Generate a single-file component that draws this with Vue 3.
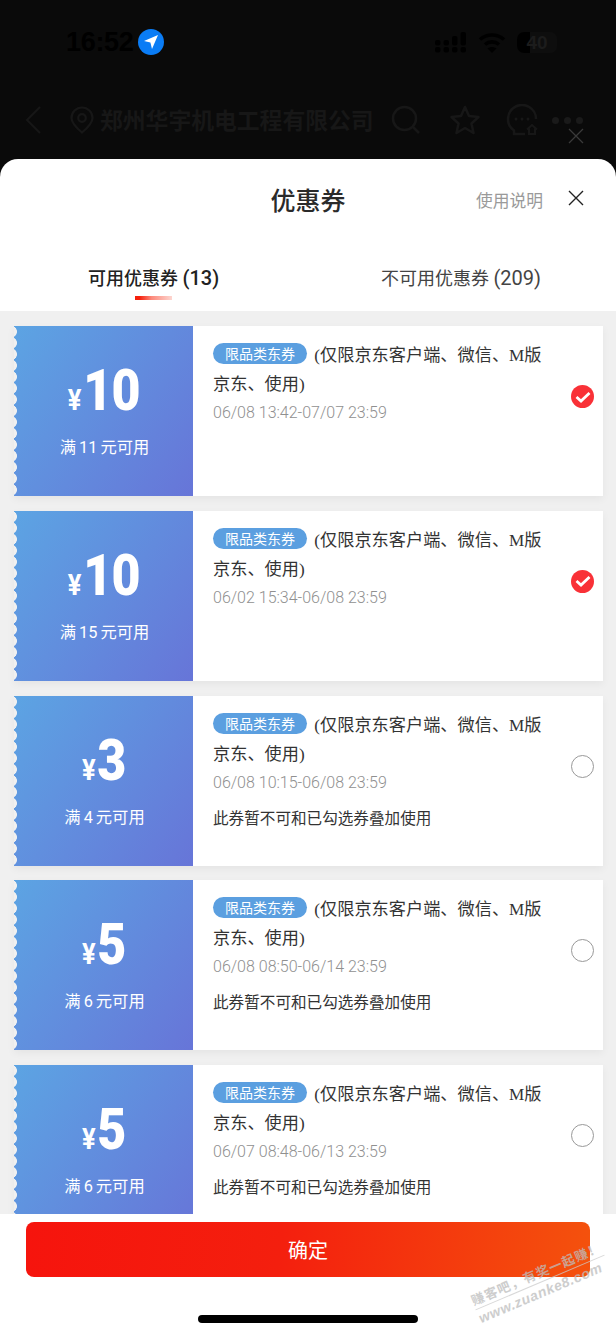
<script setup>
const coupons = [
  { amount: '10', sub: '满 11 元可用', date: '06/08 13:42-07/07 23:59', checked: true },
  { amount: '10', sub: '满 15 元可用', date: '06/02 15:34-06/08 23:59', checked: true },
  { amount: '3', sub: '满 4 元可用', date: '06/08 10:15-06/08 23:59', note: true },
  { amount: '5', sub: '满 6 元可用', date: '06/08 08:50-06/14 23:59', note: true },
  { amount: '5', sub: '满 6 元可用', date: '06/07 08:48-06/13 23:59', note: true },
]
</script>

<template>
  <div class="page">
    <div class="top">
      <div class="status">
        <span class="time">16:52</span>
        <span class="loc">
          <svg width="16" height="16" viewBox="0 0 16 16"><path d="M15 1 9 15 7.4 8.6 1 7z" fill="#fff"/></svg>
        </span>
        <span class="status-right">
          <svg width="32" height="21" viewBox="0 0 32 21" fill="#000">
            <rect x="0" y="8" width="5.500" height="5.500" rx="2"/><rect x="0" y="15" width="5.500" height="5.500" rx="2"/>
            <rect x="8.500" y="8" width="5.500" height="5.500" rx="2"/><rect x="8.500" y="15" width="5.500" height="5.500" rx="2"/>
            <rect x="17" y="4" width="5.500" height="9.500" rx="2"/><rect x="17" y="15" width="5.500" height="5.500" rx="2"/>
            <rect x="25.500" y="0" width="5.500" height="13.500" rx="2"/><rect x="25.500" y="15" width="5.500" height="5.500" rx="2"/>
          </svg>
          <svg width="28" height="21" viewBox="0 0 28 21" fill="none" stroke="#000" stroke-width="3.600">
            <path d="M2 7.500c7-6 17-6 24 0"/><path d="M7 12.500c4-3.500 10-3.500 14 0"/><path d="M14 21l-4.500-4.500c2.500-2 6.500-2 9 0z" fill="#000" stroke="none"/>
          </svg>
          <span class="battery">40</span>
        </span>
      </div>
      <div class="nav">
        <svg class="ic-back" width="16" height="28" viewBox="0 0 16 28" fill="none" stroke="#171717" stroke-width="2"><path d="M15 1 2 14l13 13"/></svg>
        <svg class="ic-pin" width="24" height="28" viewBox="0 0 24 28" fill="none" stroke="#171717" stroke-width="2.200"><path d="M12 26.500C5.500 21 1.500 16.500 1.500 12a10.500 10.500 0 0 1 21 0c0 4.500-4 9-10.500 14.500z"/><circle cx="12" cy="12" r="3.800"/></svg>
        <span class="nav-title">郑州华宇机电工程有限公司</span>
        <svg class="ic-search" width="30" height="30" viewBox="0 0 30 30" fill="none" stroke="#171717" stroke-width="2.500"><circle cx="13.500" cy="13.500" r="11.500"/><path d="m22 22 6 6"/></svg>
        <svg class="ic-star" width="32" height="32" viewBox="0 0 32 32" fill="none" stroke="#171717" stroke-width="2.500" stroke-linejoin="round"><path d="m16 3 4 9 9.500 1-7 6.500 2 9.500-8.500-5-8.500 5 2-9.500-7-6.500L12 12z"/></svg>
        <svg class="ic-chat" width="32" height="32" viewBox="0 0 32 32" fill="none" stroke="#171717" stroke-width="2.500"><path d="M30 15A14 14 0 1 0 8 26.500V30h11"/><circle cx="10" cy="15" r="1.500" fill="#171717" stroke="none"/><circle cx="16" cy="15" r="1.500" fill="#171717" stroke="none"/><circle cx="22" cy="15" r="1.500" fill="#171717" stroke="none"/><path d="M21 25.500l5-4.500 5 4.500M23 24.500V30h6v-5.500" stroke-width="2"/></svg>
        <span class="dots"><i></i><i></i><i></i></span>
      </div>
      <svg class="outer-close" width="16" height="16" viewBox="0 0 16 16" stroke="#3a3a3a" stroke-width="1.300"><path d="m1 1 14 14M15 1 1 15"/></svg>
    </div>

    <div class="sheet">
      <div class="head">
        <span class="title">优惠券</span>
        <span class="help">使用说明</span>
        <svg class="close" width="16" height="16" viewBox="0 0 16 16" stroke="#222" stroke-width="1.400"><path d="m1 1 14 14M15 1 1 15"/></svg>
      </div>
      <div class="tabs">
        <div class="tab active">可用优惠券 <span class="count">(13)</span><i class="bar"></i></div>
        <div class="tab">不可用优惠券 <span class="count">(209)</span></div>
      </div>
      <div class="list">
        <div v-for="(c, i) in coupons" :key="i" class="card">
          <div class="left">
            <div class="price"><span class="yen">¥</span><span class="num">{{ c.amount }}</span></div>
            <div class="sub">{{ c.sub }}</div>
          </div>
          <div class="right">
            <div class="desc"><span class="tag">限品类东券</span> (仅限京东客户端、微信、M版京东、使用)</div>
            <div class="date">{{ c.date }}</div>
            <div v-if="c.note" class="note">此券暂不可和已勾选券叠加使用</div>
            <span v-if="c.checked" class="radio on">
              <svg width="16" height="12" viewBox="0 0 16 12" fill="none" stroke="#fff" stroke-width="2.800"><path d="m1.500 6 4.500 4 8.500-8"/></svg>
            </span>
            <span v-else class="radio"></span>
          </div>
        </div>
      </div>
      <div class="footer">
        <button class="confirm">确定</button>
        <div class="home"></div>
      </div>
    </div>
    <div class="mark"><div class="m1">赚客吧，有奖一起赚！</div><div class="m2">www.zuanke8.com</div></div>
  </div>
</template>

<style scoped>
.page { position: relative; width: 616px; height: 1334px; overflow: hidden; background: #0a0a0a; display: flex; flex-direction: column; font-family: "Noto Sans CJK SC", sans-serif; }
.top { position: relative; height: 159px; flex: none; }
.status { height: 84px; display: flex; align-items: center; padding: 0 0 0 66px; box-sizing: border-box; }
.time { font: 600 27px/1 "Liberation Sans", sans-serif; color: #000; letter-spacing: -.3px; width: 72px; }
.loc { width: 26px; height: 26px; border-radius: 50%; background: #0a7cf5; display: flex; align-items: center; justify-content: center; }
.status-right { margin-left: auto; margin-right: 59px; display: flex; align-items: center; gap: 11px; }
.battery { width: 40px; height: 21px; background: linear-gradient(90deg, #000 0 32%, #0e0e0e 32%); border-radius: 7px; color: #1c1c1c; font: 700 19px/21px "Liberation Sans", sans-serif; text-align: center; }
.nav { position: relative; height: 30px; margin-top: 21px; display: flex; align-items: center; padding-left: 25px; }
.ic-back { margin-right: 29px; }
.ic-pin { margin-right: 6px; }
.nav-title { font-size: 22.800px; line-height: 30px; font-weight: 700; color: #171717; width: 274px; white-space: nowrap; }
.ic-search { margin-left: 17px; }
.ic-star { margin-left: 28px; }
.ic-chat { margin-left: 25px; }
.dots { display: flex; gap: 5px; margin-left: 14px; }
.dots i { width: 7px; height: 7px; border-radius: 50%; background: #1a1a1a; }
.outer-close { position: absolute; left: 568px; top: 128px; }

.sheet { flex: 1; min-height: 0; background: #fff; border-radius: 18px 18px 0 0; display: flex; flex-direction: column; }
.head { position: relative; height: 84px; flex: none; display: flex; justify-content: center; padding-top: 22px; box-sizing: border-box; }
.title { font-size: 25px; line-height: 36px; font-weight: 500; color: #2a2a2a; }
.help { position: absolute; left: 476px; top: 28px; font-size: 16.800px; line-height: 26px; color: #9a9a9a; }
.close { position: absolute; left: 568px; top: 31px; }
.tabs { height: 68px; flex: none; position: relative; }
.tab { position: absolute; top: 21px; left: 381px; font-size: 18px; line-height: 28px; color: #444; white-space: nowrap; font-family: Roboto, "Noto Sans CJK SC", sans-serif; }
.tab.active { left: 88px; font-weight: 500; color: #222; }
.count { font-size: 20px; }
.bar { position: absolute; left: 47px; top: 32px; width: 37px; height: 4px; background: linear-gradient(90deg, #f5200c 0 12%, #fc8a7c 45%, #fdd6d0); }

.list { flex: 1; min-height: 0; overflow: hidden; background: #f0f0f0; padding: 15px 13px 0 14px; display: flex; flex-direction: column; gap: 14.800px; }
.card { flex: none; height: 170px; display: flex; background: #fff; box-shadow: 0 3px 8px rgba(0, 0, 0, .05); }
.left { position: relative; width: 179px; flex: none; background: linear-gradient(125deg, #5ca4e3, #6775d8); color: #fff; display: flex; flex-direction: column; align-items: center; }
.left::before { content: ""; position: absolute; left: 0; top: 0; bottom: 0; width: 4px; background: radial-gradient(circle at -3px 50%, #f0f0f0 5.600px, transparent 6.200px) 0 0 / 4px 11.300px repeat-y; }
.price { margin-top: 33px; padding-left: 1px; display: flex; align-items: baseline; justify-content: center; transform: scaleX(.88); }
.yen { font: 700 29px/1 Roboto, sans-serif; margin-right: 2px; }
.num { font: 900 57px/64px Roboto, sans-serif; letter-spacing: -1px; }
.sub { position: absolute; top: 109px; left: 2px; right: 0; text-align: center; font: 400 16.300px/26px Roboto, "Noto Sans CJK SC", sans-serif; word-spacing: -1px; white-space: nowrap; }
.right { position: relative; flex: 1; min-width: 0; padding: 15px 54px 0 20px; }
.desc { font: 400 17.200px/29px "Liberation Serif", "Noto Sans CJK SC", serif; color: #333; }
.tag { display: inline-block; width: 94px; height: 21px; border-radius: 11px; background: #5b9fe0; color: #fff; font: 400 14px/21px "Noto Sans CJK SC", sans-serif; text-align: center; vertical-align: 2px; margin-right: 3px; }
.date { font: 300 16px/20px Roboto, sans-serif; color: #909090; margin-top: 4px; white-space: nowrap; }
.note { font-size: 15.600px; line-height: 24px; color: #333; margin-top: 12px; white-space: nowrap; }
.radio { position: absolute; left: 378px; top: 59px; width: 23px; height: 23px; box-sizing: border-box; border: 1px solid #999; border-radius: 50%; display: flex; align-items: center; justify-content: center; }
.radio.on { background: #f93137; border: 0; }

.footer { position: relative; height: 120px; flex: none; background: #fff; padding: 8px 26px 0; box-sizing: border-box; }
.confirm { display: block; width: 564px; height: 55px; border: 0; border-radius: 8px; background: linear-gradient(95deg, #f6140d, #f41f0e 45%, #f4520d); color: #fff; font: 400 20px/55px "Noto Sans CJK SC", sans-serif; padding: 0; }
.home { position: absolute; left: 198px; top: 101px; width: 220px; height: 8px; border-radius: 4px; background: #000; }
.mark { position: absolute; left: 470px; top: 1264px; transform: rotate(-23deg); color: #bdbdbd; opacity: .75; white-space: nowrap; pointer-events: none; }
.m1 { font-size: 13px; line-height: 18px; font-weight: 700; border-bottom: 1px solid #ccc; letter-spacing: 1px; }
.m2 { font: italic 700 14px/18px "Liberation Sans", sans-serif; letter-spacing: .6px; }
</style>
